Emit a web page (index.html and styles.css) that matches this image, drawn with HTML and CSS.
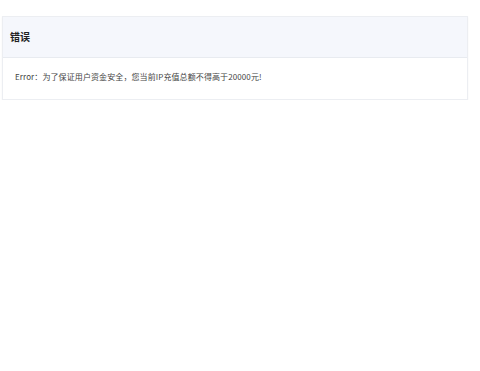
FILE: index.html
```html
<!DOCTYPE html>
<html lang="zh-CN">
<head>
    <meta charset="UTF-8">
    <title>错误</title>
    <link rel="stylesheet" href="styles.css">
</head>
<body>
    <div class="panel">
        <div class="panel-head">
            <h3>错误</h3>
        </div>
        <div class="panel-body">
            Error：为了保证用户资金安全，您当前IP充值总额不得高于20000元!
        </div>
    </div>
</body>
</html>
```

FILE: styles.css
```css
body {
    font-family: "Noto Sans CJK SC", "Liberation Sans", sans-serif;
    background: #fff;
    margin: 0;
    padding: 0;
}
.panel {
    width: 464px;
    margin: 16px 0 0 2px;
    border: 1px solid #eceef2;
    box-shadow: 0 1px 2px rgba(0, 0, 0, 0.04);
}
.panel-head {
    height: 40px;
    display: flex;
    align-items: center;
    padding: 0 7px;
    background: #f5f7fc;
    border-bottom: 1px solid #e8ebf0;
}
.panel-head h3 {
    margin: 0 0 2px;
    font-size: 10px;
    font-weight: bold;
    color: #222;
}
.panel-body {
    height: 41px;
    display: flex;
    align-items: center;
    padding: 0 0 4px 12px;
    box-sizing: border-box;
    font-size: 8px;
    letter-spacing: 0.1px;
    color: #444;
}
```
